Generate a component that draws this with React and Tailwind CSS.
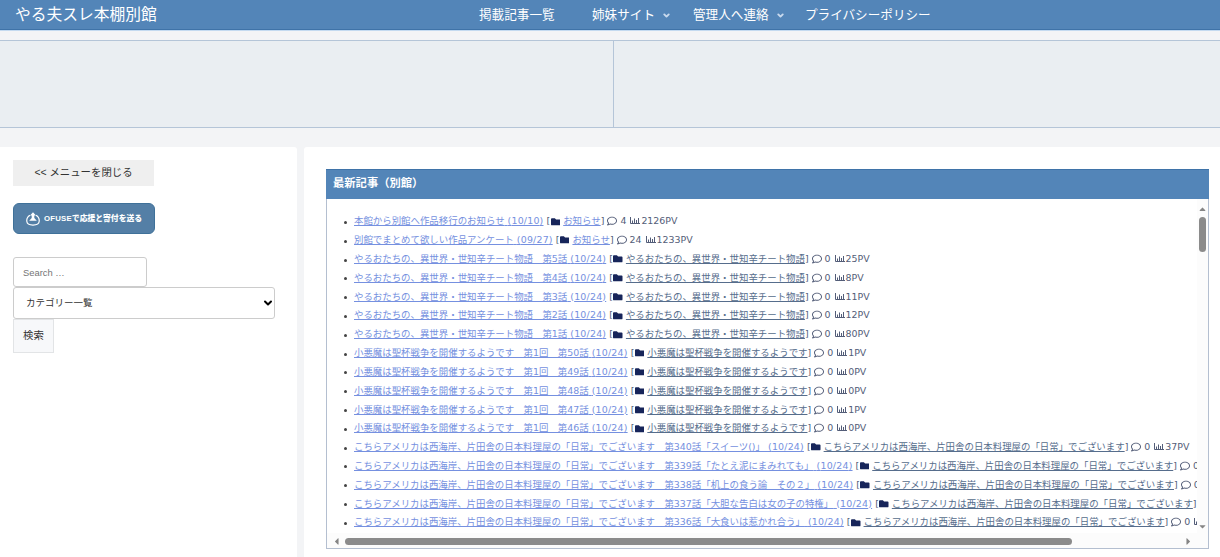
import { useState } from "react";
import { FaFolder, FaRegComment, FaCaretUp } from "react-icons/fa";
import { FiChevronDown } from "react-icons/fi";

const YARUO = "やるおたちの、異世界・世知辛チート物語";
const AKUMA = "小悪魔は聖杯戦争を開催するようです";
const AMERICA = "こちらアメリカは西海岸、片田舎の日本料理屋の「日常」でございます";

const articles = [
  { title: "本館から別館へ作品移行のお知らせ", date: "10/10", category: "お知らせ", comments: 4, pv: 2126, notice: true },
  { title: "別館でまとめて欲しい作品アンケート", date: "09/27", category: "お知らせ", comments: 24, pv: 1233, notice: true },
  { title: `${YARUO}　第5話`, date: "10/24", category: YARUO, comments: 0, pv: 25 },
  { title: `${YARUO}　第4話`, date: "10/24", category: YARUO, comments: 0, pv: 8 },
  { title: `${YARUO}　第3話`, date: "10/24", category: YARUO, comments: 0, pv: 11 },
  { title: `${YARUO}　第2話`, date: "10/24", category: YARUO, comments: 0, pv: 12 },
  { title: `${YARUO}　第1話`, date: "10/24", category: YARUO, comments: 0, pv: 80 },
  { title: `${AKUMA}　第1回　第50話`, date: "10/24", category: AKUMA, comments: 0, pv: 1 },
  { title: `${AKUMA}　第1回　第49話`, date: "10/24", category: AKUMA, comments: 0, pv: 0 },
  { title: `${AKUMA}　第1回　第48話`, date: "10/24", category: AKUMA, comments: 0, pv: 0 },
  { title: `${AKUMA}　第1回　第47話`, date: "10/24", category: AKUMA, comments: 0, pv: 1 },
  { title: `${AKUMA}　第1回　第46話`, date: "10/24", category: AKUMA, comments: 0, pv: 0 },
  { title: `${AMERICA}　第340話「スイーツ()」`, date: "10/24", category: AMERICA, comments: 0, pv: 37 },
  { title: `${AMERICA}　第339話「たとえ泥にまみれても」`, date: "10/24", category: AMERICA, comments: 0 },
  { title: `${AMERICA}　第338話「机上の食う論　その２」`, date: "10/24", category: AMERICA, comments: 0 },
  { title: `${AMERICA}　第337話「大胆な告白は女の子の特権」`, date: "10/24", category: AMERICA },
  { title: `${AMERICA}　第336話「大食いは惹かれ合う」`, date: "10/24", category: AMERICA, comments: 0 },
];

function Header() {
  return (
    <header className="flex h-[30px] shrink-0 items-start border-b border-[#3f73a8] bg-[#5385b8] pl-[15px] text-white">
      <h1 className="w-[464px] text-[15.75px] leading-[29px]">やる夫スレ本棚別館</h1>
      <nav className="flex text-[12.6px] leading-[30px]">
        <a className="w-[113px]">掲載記事一覧</a>
        <a className="flex w-[101px] items-center">
          姉妹サイト
          <FiChevronDown className="ml-[7px] size-[9px] stroke-[5] text-[#c9daee]" />
        </a>
        <a className="flex w-[112px] items-center">
          管理人へ連絡
          <FiChevronDown className="ml-[7px] size-[9px] stroke-[5] text-[#c9daee]" />
        </a>
        <a>プライバシーポリシー</a>
      </nav>
    </header>
  );
}

function ChartIcon() {
  return (
    <svg viewBox="0 0 10 9" className="mb-px ml-[4px] h-[9px] w-[10px] shrink-0" fill="none" stroke="currentColor">
      <path d="M.5 1v6.500H10" strokeWidth="1" />
      <path d="M2.500 7V4.500M4.500 7V2.500M6.500 7V4M8.500 7V2" strokeWidth="1" />
    </svg>
  );
}

function OfuseButton() {
  return (
    <button className="mt-[17px] flex h-[31px] w-[142px] items-center rounded-[6px] border border-[#3f7199] bg-[#547fa6] pl-[12px] text-[7.8px] font-black text-white">
      <svg viewBox="0 0 14 14" className="mr-[4px] size-[14px] shrink-0" fill="none" stroke="currentColor">
        <path d="M4 3.200C1.400 4.600.6 7 .8 9.300c.2 2.600 2 3.800 6.200 3.800s6-1.200 6.200-3.800C13.400 7 12.600 4.600 10 3.200" strokeWidth="1.200" />
        <path d="M7 .3 10 3.400H8.300V6l2.500 2.800H3.200L5.700 6V3.400H4z" fill="currentColor" stroke="none" />
      </svg>
      <span className="whitespace-nowrap">
        <span className="font-['Liberation_Sans'] tracking-[0.2px]">OFUSE</span>で応援と寄付を送る
      </span>
    </button>
  );
}

function Sidebar() {
  const [keyword, setKeyword] = useState("");

  return (
    <aside className="w-[297px] rounded-tr-[3px] bg-white pt-[13px] pl-[13px] text-[#333]">
      <button className="block h-[26px] w-[141px] bg-[#efefef] font-['Liberation_Sans','Noto_Sans_CJK_JP',sans-serif] text-[10.4px]">
        &lt;&lt; メニューを閉じる
      </button>
      <OfuseButton />
      <form className="mt-[23px] flex flex-col items-start" onSubmit={(e) => e.preventDefault()}>
        <input
          type="text"
          value={keyword}
          onChange={(e) => setKeyword(e.target.value)}
          placeholder="Search …"
          className="h-[30px] w-[134px] rounded-[3px] border border-[#ccc] px-[9px] font-['Liberation_Sans'] text-[9.4px] placeholder:text-[#757575]"
        />
        <div className="grid w-[262px] grid-cols-1 items-center">
          <select className="col-start-1 row-start-1 h-[32px] appearance-none rounded-[3px] border border-[#ccc] bg-white pl-[12px] text-[9.5px]">
            <option>カテゴリー一覧</option>
          </select>
          <FiChevronDown className="pointer-events-none col-start-1 row-start-1 mr-px size-[12px] justify-self-end stroke-[4] text-black" />
        </div>
        <button type="submit" className="h-[34px] w-[41px] border border-[#e2e4e6] bg-[#f7f8fa] text-[10.4px]">
          検索
        </button>
      </form>
    </aside>
  );
}

function ArticleRow({ article }) {
  return (
    <li className="flex h-[18.82px] items-center whitespace-nowrap">
      <span className="mt-[2px] mr-[7px] size-[3px] shrink-0 rounded-full bg-[#444]" />
      <a className="text-[#7590e0] underline">
        {article.title} <span className="tracking-[0.2px]">({article.date})</span>
      </a>
      <span className="ml-[3px]">[</span>
      <FaFolder className="mr-[3px] ml-[0.5px] size-[9.5px] shrink-0 text-[#17255a]" />
      <a className={article.notice ? "text-[#7590e0] underline" : "text-[#566d8c] underline"}>{article.category}</a>
      <span>]</span>
      {article.comments !== undefined && (
        <>
          <FaRegComment className="ml-[3px] size-[10px] shrink-0" />
          <span className="ml-[3px]">{article.comments}</span>
          <ChartIcon />
        </>
      )}
      {article.pv !== undefined && <span className="ml-px">{article.pv}PV</span>}
    </li>
  );
}

function LatestArticles() {
  return (
    <section className="flex h-[380px] w-[883px] flex-col">
      <h2 className="h-[30px] shrink-0 border-t border-[#3f73a8] bg-[#5385b8] pl-[7px] text-[11.300px] leading-[28px] font-bold text-white">
        最新記事（別館）
      </h2>
      <div className="grid min-h-0 flex-1 grid-cols-[870px_11px] grid-rows-[334px_15px] border border-t-0 border-[#b4bfd0]">
        <ul className="overflow-hidden pt-[13px] pl-[17px] text-[9.440px] leading-[18px] text-[#535d78]">
          {articles.map((article) => (
            <ArticleRow key={article.title} article={article} />
          ))}
        </ul>
        <div className="flex flex-col items-center bg-[#fcfcfc] pt-[5px] pb-px text-[#858585]">
          <FaCaretUp className="h-[10px] w-[11px]" />
          <div className="mt-[3px] h-[35px] w-[7px] rounded-full bg-[#8b8b8b]" />
          <FaCaretUp className="mt-auto h-[10px] w-[11px] rotate-180" />
        </div>
        <div className="flex items-center bg-[#fcfcfc] pt-px pl-[5px] text-[#858585]">
          <FaCaretUp className="h-[11px] w-[9px] -rotate-90" />
          <div className="ml-[4px] h-[7px] w-[727px] rounded-full bg-[#8b8b8b]" />
          <FaCaretUp className="mr-[4px] ml-auto h-[11px] w-[9px] rotate-90" />
        </div>
        <div className="bg-[#fcfcfc]" />
      </div>
    </section>
  );
}

function App() {
  return (
    <div className="flex h-[557px] w-[1220px] flex-col overflow-hidden bg-[#f3f4f6] font-['DejaVu_Sans','Noto_Sans_CJK_JP',sans-serif]">
      <Header />
      <div className="h-px shrink-0 bg-[#c4daf0]" />
      <div className="mt-[9px] grid h-[88px] shrink-0 grid-cols-[613px_1fr] border-y border-[#b5c5d8] bg-[#eaeef2]">
        <div />
        <div className="border-l border-[#b5c5d8]" />
      </div>
      <div className="mt-[19px] flex flex-1 gap-[7px]">
        <Sidebar />
        <main className="flex-1 rounded-tl-[3px] bg-white pt-[22px] pl-[22px]">
          <LatestArticles />
        </main>
      </div>
    </div>
  );
}

export default App;
